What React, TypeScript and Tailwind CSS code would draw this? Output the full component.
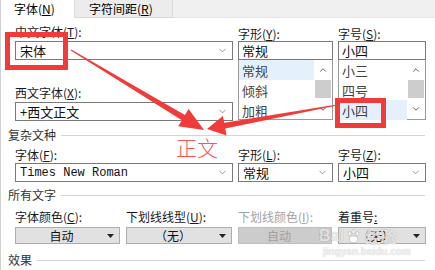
import React from 'react';
import { ChevronDown, ChevronUp } from 'lucide-react';

const RED = '#f03b3b';

function Label({ text, k, dim }: { text: string; k?: string; dim?: boolean }) {
  return (
    <div className={`h-[16px] whitespace-nowrap text-[12px] leading-[16px] ${dim ? 'text-[#a3a3a3]' : 'text-[#1a1a1a]'}`}>
      {text}
      {k && (
        <>
          (<span className="underline">{k}</span>)
        </>
      )}
      :
    </div>
  );
}

function Select({ value, mono }: { value: string; mono?: boolean }) {
  return (
    <div className="flex h-[19px] items-center border border-[#7a7a7a] bg-white pl-[4px] pr-[4px]">
      <span
        className={
          mono
            ? "flex-1 font-['Liberation_Mono',monospace] text-[12px] leading-none text-[#111]"
            : 'flex-1 text-[13px] leading-none text-[#111]'
        }
      >
        {value}
      </span>
      <ChevronDown size={11} strokeWidth={1.3} className="text-[#555]" />
    </div>
  );
}

function Combo({ value }: { value: string }) {
  return (
    <div className="flex h-[19px] items-center border border-[#7a7a7a] bg-white pl-[3px] text-[13px] leading-none text-[#111]">
      {value}
    </div>
  );
}

function ListBox({ items, selected }: { items: string[]; selected: number }) {
  return (
    <div className="flex h-[60px] border border-t-0 border-[#9a9a9a] bg-white">
      <div className="flex flex-1 flex-col">
        {items.map((it, i) => (
          <div
            key={it}
            className={`h-[20px] pl-[3px] text-[13px] leading-[22px] text-[#444] ${i === selected ? 'bg-[#e5f0fd]' : ''}`}
          >
            {it}
          </div>
        ))}
      </div>
      <div className="flex w-[18px] flex-col items-center">
        <div className="flex h-[20px] items-center">
          <ChevronUp size={10} strokeWidth={2.2} className="text-[#555]" />
        </div>
        <div className="h-[18px] w-[16px] bg-[#cdcdcd]" />
        <div className="flex flex-1 items-center">
          <ChevronDown size={10} strokeWidth={2.2} className="text-[#555]" />
        </div>
      </div>
    </div>
  );
}

function Heading({ text }: { text: string }) {
  return (
    <div className="flex h-[16px] items-center pl-[7px] pr-[10px]">
      <span className="text-[12px] leading-none text-[#333]">{text}</span>
      <div className="ml-[5px] h-px flex-1 bg-[#d5d5d5]" />
    </div>
  );
}

function DropButton({ value, disabled }: { value: string; disabled?: boolean }) {
  return (
    <div
      className={`flex h-[17px] items-center border pr-[5px] ${
        disabled ? 'border-[#bfbfbf] bg-[#cccccc] text-[#a0a0a0]' : 'border-[#adadad] bg-[#e1e1e1] text-[#111]'
      }`}
    >
      <span className="flex-1 text-center text-[12px] leading-none">{value}</span>
      <svg width="7" height="4" viewBox="0 0 7 4">
        <polygon points="0,0 7,0 3.5,4" fill={disabled ? '#999' : '#222'} />
      </svg>
    </div>
  );
}

export default function App() {
  return (
    <div className="relative h-[270px] w-[435px] overflow-hidden border-l border-[#d0d0d0] bg-white font-['Noto_Sans_CJK_SC','Liberation_Sans',sans-serif]">
      {/* tabs */}
      <div className="flex h-[18px] bg-[#f0f0f0]">
        <div className="w-[74px] border-r border-[#d9d9d9] bg-white pl-[13px] text-[12px] leading-[18px]">
          字体(<span className="underline">N</span>)
        </div>
        <div className="w-[98px] border-r border-b border-[#d9d9d9] bg-[#ececec] pl-[14px] text-[12px] leading-[18px]">
          字符间距(<span className="underline">R</span>)
        </div>
        <div className="flex-1 border-b border-[#e3e3e3]" />
      </div>

      {/* 中文 / 西文 */}
      <div className="grid grid-cols-[218px_95px_88px] gap-x-[5px] pl-[14px] pt-[6px]">
        <div className="flex flex-col">
          <div className="h-[17px]">
            <Label text="中文字体" k="T" />
          </div>
          <Select value="宋体" />
          <div className="mt-[25px] h-[17px]">
            <Label text="西文字体" k="X" />
          </div>
          <Select value="+西文正文" />
        </div>
        <div className="flex flex-col">
          <div className="h-[17px] pt-[2px]">
            <Label text="字形" k="Y" />
          </div>
          <Combo value="常规" />
          <ListBox items={['常规', '倾斜', '加粗']} selected={0} />
        </div>
        <div className="flex flex-col">
          <div className="h-[17px] pt-[2px]">
            <Label text="字号" k="S" />
          </div>
          <Combo value="小四" />
          <ListBox items={['小三', '四号', '小四']} selected={2} />
        </div>
      </div>

      {/* 复杂文种 */}
      <div className="mt-[6px]">
        <Heading text="复杂文种" />
      </div>
      <div className="grid grid-cols-[218px_95px_88px] gap-x-[5px] pl-[14px] pt-[4px]">
        <div className="flex flex-col">
          <Label text="字体" k="F" />
          <Select value="Times New Roman" mono />
        </div>
        <div className="flex flex-col">
          <Label text="字形" k="L" />
          <Select value="常规" />
        </div>
        <div className="flex flex-col">
          <Label text="字号" k="Z" />
          <Select value="小四" />
        </div>
      </div>

      {/* 所有文字 */}
      <div className="mt-[5px]">
        <Heading text="所有文字" />
      </div>
      <div className="grid grid-cols-[105px_106px_94px_88px] gap-x-[6px] pl-[14px] pt-[6px]">
        <Label text="字体颜色" k="C" />
        <Label text="下划线线型" k="U" />
        <Label text="下划线颜色" k="I" dim />
        <div className="h-[16px] text-[12px] leading-[16px] text-[#1a1a1a]">
          着重号<span className="underline">:</span>
        </div>
        <div className="mt-[2px]">
          <DropButton value="自动" />
        </div>
        <div className="mt-[2px]">
          <DropButton value="（无）" />
        </div>
        <div className="mt-[2px]">
          <DropButton value="自动" disabled />
        </div>
        <div className="mt-[2px]">
          <DropButton value="（无）" />
        </div>
      </div>

      <div className="mt-[8px]">
        <Heading text="效果" />
      </div>

      {/* annotations */}
      <div className="absolute left-[4px] top-[32px] h-[38px] w-[63px] border-[5px] border-[#f03b3b]" />
      <div className="absolute left-[334px] top-[98px] h-[30px] w-[51px] border-[5px] border-[#f03b3b]" />
      <div className="absolute left-[175px] top-[137px] text-[21px] font-light leading-none text-[#ff5252]">正文</div>
      <svg className="pointer-events-none absolute left-0 top-0" width="435" height="270" viewBox="0 0 435 270">
        <polygon
          points="70.3,49.5 183.9,115 187.6,109 203,130 177.2,126.2 180.9,120.2 69.7,50.5"
          fill={RED}
        />
        <polygon
          points="335.9,104.4 223.2,122.8 221.9,115.9 206,129 225.5,135.5 224.2,128.6 336.1,105.6"
          fill={RED}
        />
      </svg>

      {/* watermark */}
      <div className="pointer-events-none absolute left-[318px] top-[228px] flex items-center gap-[2px] text-[16px] font-bold leading-none text-white/75 [text-shadow:0_0_1px_rgba(0,0,0,0.35)]">
        <span className="font-['Liberation_Sans',sans-serif]">Bai</span>
        <svg width="15" height="15" viewBox="0 0 16 16">
          <g fill="rgba(255,255,255,0.8)" stroke="rgba(0,0,0,0.25)" strokeWidth="0.6">
            <ellipse cx="4" cy="5" rx="1.6" ry="2.2" />
            <ellipse cx="8" cy="3" rx="1.6" ry="2.2" />
            <ellipse cx="12" cy="5" rx="1.6" ry="2.2" />
            <ellipse cx="8" cy="11" rx="4.5" ry="3.6" />
          </g>
        </svg>
        <span className="ml-[2px]">经验</span>
      </div>
      <div className="pointer-events-none absolute left-[322px] top-[247px] font-['Liberation_Sans',sans-serif] text-[10px] font-bold leading-none text-white/70 [text-shadow:0_0_1px_rgba(0,0,0,0.25)]">
        jingyan.baidu.com
      </div>
    </div>
  );
}
